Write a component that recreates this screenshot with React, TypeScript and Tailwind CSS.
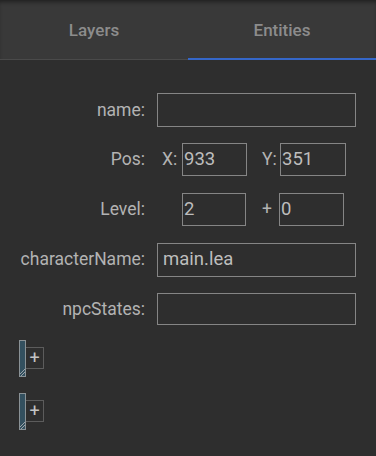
import React from "react";

const font = { fontFamily: "Roboto, 'Noto Sans', sans-serif" };

function Input({ value = "", className = "" }: { value?: string; className?: string }) {
  return (
    <div
      className={`border border-[#858585] text-[18.5px] text-[#bdbdbd] leading-none flex items-center pl-[5px] ${className}`}
    >
      {value}
    </div>
  );
}

function Label({ children }: { children: React.ReactNode }) {
  return <div className="w-[145px] shrink-0 text-right text-[17.5px] text-[#b3b3b3]">{children}</div>;
}

function AddItem() {
  return (
    <div className="flex items-start">
      <div className="relative w-[7px] h-[37px] border border-[#8a9296] bg-[#33505f]">
        <svg className="absolute bottom-0 right-0" width="5" height="7" viewBox="0 0 5 7">
          <line x1="0" y1="5" x2="5" y2="0" stroke="#9aa3a8" strokeWidth="1" />
          <line x1="1" y1="7" x2="5" y2="3" stroke="#9aa3a8" strokeWidth="1" />
        </svg>
      </div>
      <div className="mt-[7px] -ml-[1px] w-[19px] h-[22px] border border-[#5c5c5c] flex items-center justify-center text-[#c4c4c4] text-[18px] font-normal leading-none pb-[1px]">
        +
      </div>
    </div>
  );
}

export default function App() {
  return (
    <div className="w-[376px] h-[456px] bg-[#2e2e2e] flex flex-col" style={font}>
      <div className="h-[60px] bg-[#393939] flex border-b border-[#4a4a4a] shadow-[inset_0_4px_4px_-2px_rgba(0,0,0,0.45)]">
        <div className="flex-1 flex items-center justify-center text-[17px] font-medium text-[#8c8c8c] pt-[2px]">
          Layers
        </div>
        <div className="flex-1 flex items-center justify-center text-[17px] font-medium text-[#8c8c8c] border-b-2 border-[#3567c9] -mb-[1px] pt-[3px]">
          Entities
        </div>
      </div>
      <div className="flex flex-col pt-[33px]">
        <div className="flex items-center h-[34px]">
          <Label>name:</Label>
          <Input className="ml-[12px] w-[199px] h-[34px]" />
        </div>
        <div className="flex items-center h-[33px] mt-[16px]">
          <Label>Pos:</Label>
          <div className="ml-[17px] w-[20px] text-[17.5px] text-[#b3b3b3]">X:</div>
          <Input value="933" className="w-[65px] h-[33px] !pl-[1px]" />
          <div className="ml-[15px] w-[18px] text-[17.5px] text-[#b3b3b3]">Y:</div>
          <Input value="351" className="w-[66px] h-[33px] !pl-[1px]" />
        </div>
        <div className="flex items-center h-[33px] mt-[17px]">
          <Label>Level:</Label>
          <div className="ml-[17px] w-[20px]" />
          <Input value="2" className="w-[64px] h-[33px] !pl-[1px]" />
          <div className="ml-[16px] w-[17px] text-[17.5px] text-[#b3b3b3]">+</div>
          <Input value="0" className="w-[65px] h-[33px] !pl-[1px]" />
        </div>
        <div className="flex items-center h-[33px] mt-[17px]">
          <Label>characterName:</Label>
          <Input value="main.lea" className="ml-[12px] w-[199px] h-[34px]" />
        </div>
        <div className="flex items-center h-[32px] mt-[17px]">
          <Label>npcStates:</Label>
          <Input className="ml-[12px] w-[199px] h-[32px]" />
        </div>
        <div className="pl-[19px] mt-[15px] flex flex-col gap-[16px]">
          <AddItem />
          <AddItem />
        </div>
      </div>
    </div>
  );
}
